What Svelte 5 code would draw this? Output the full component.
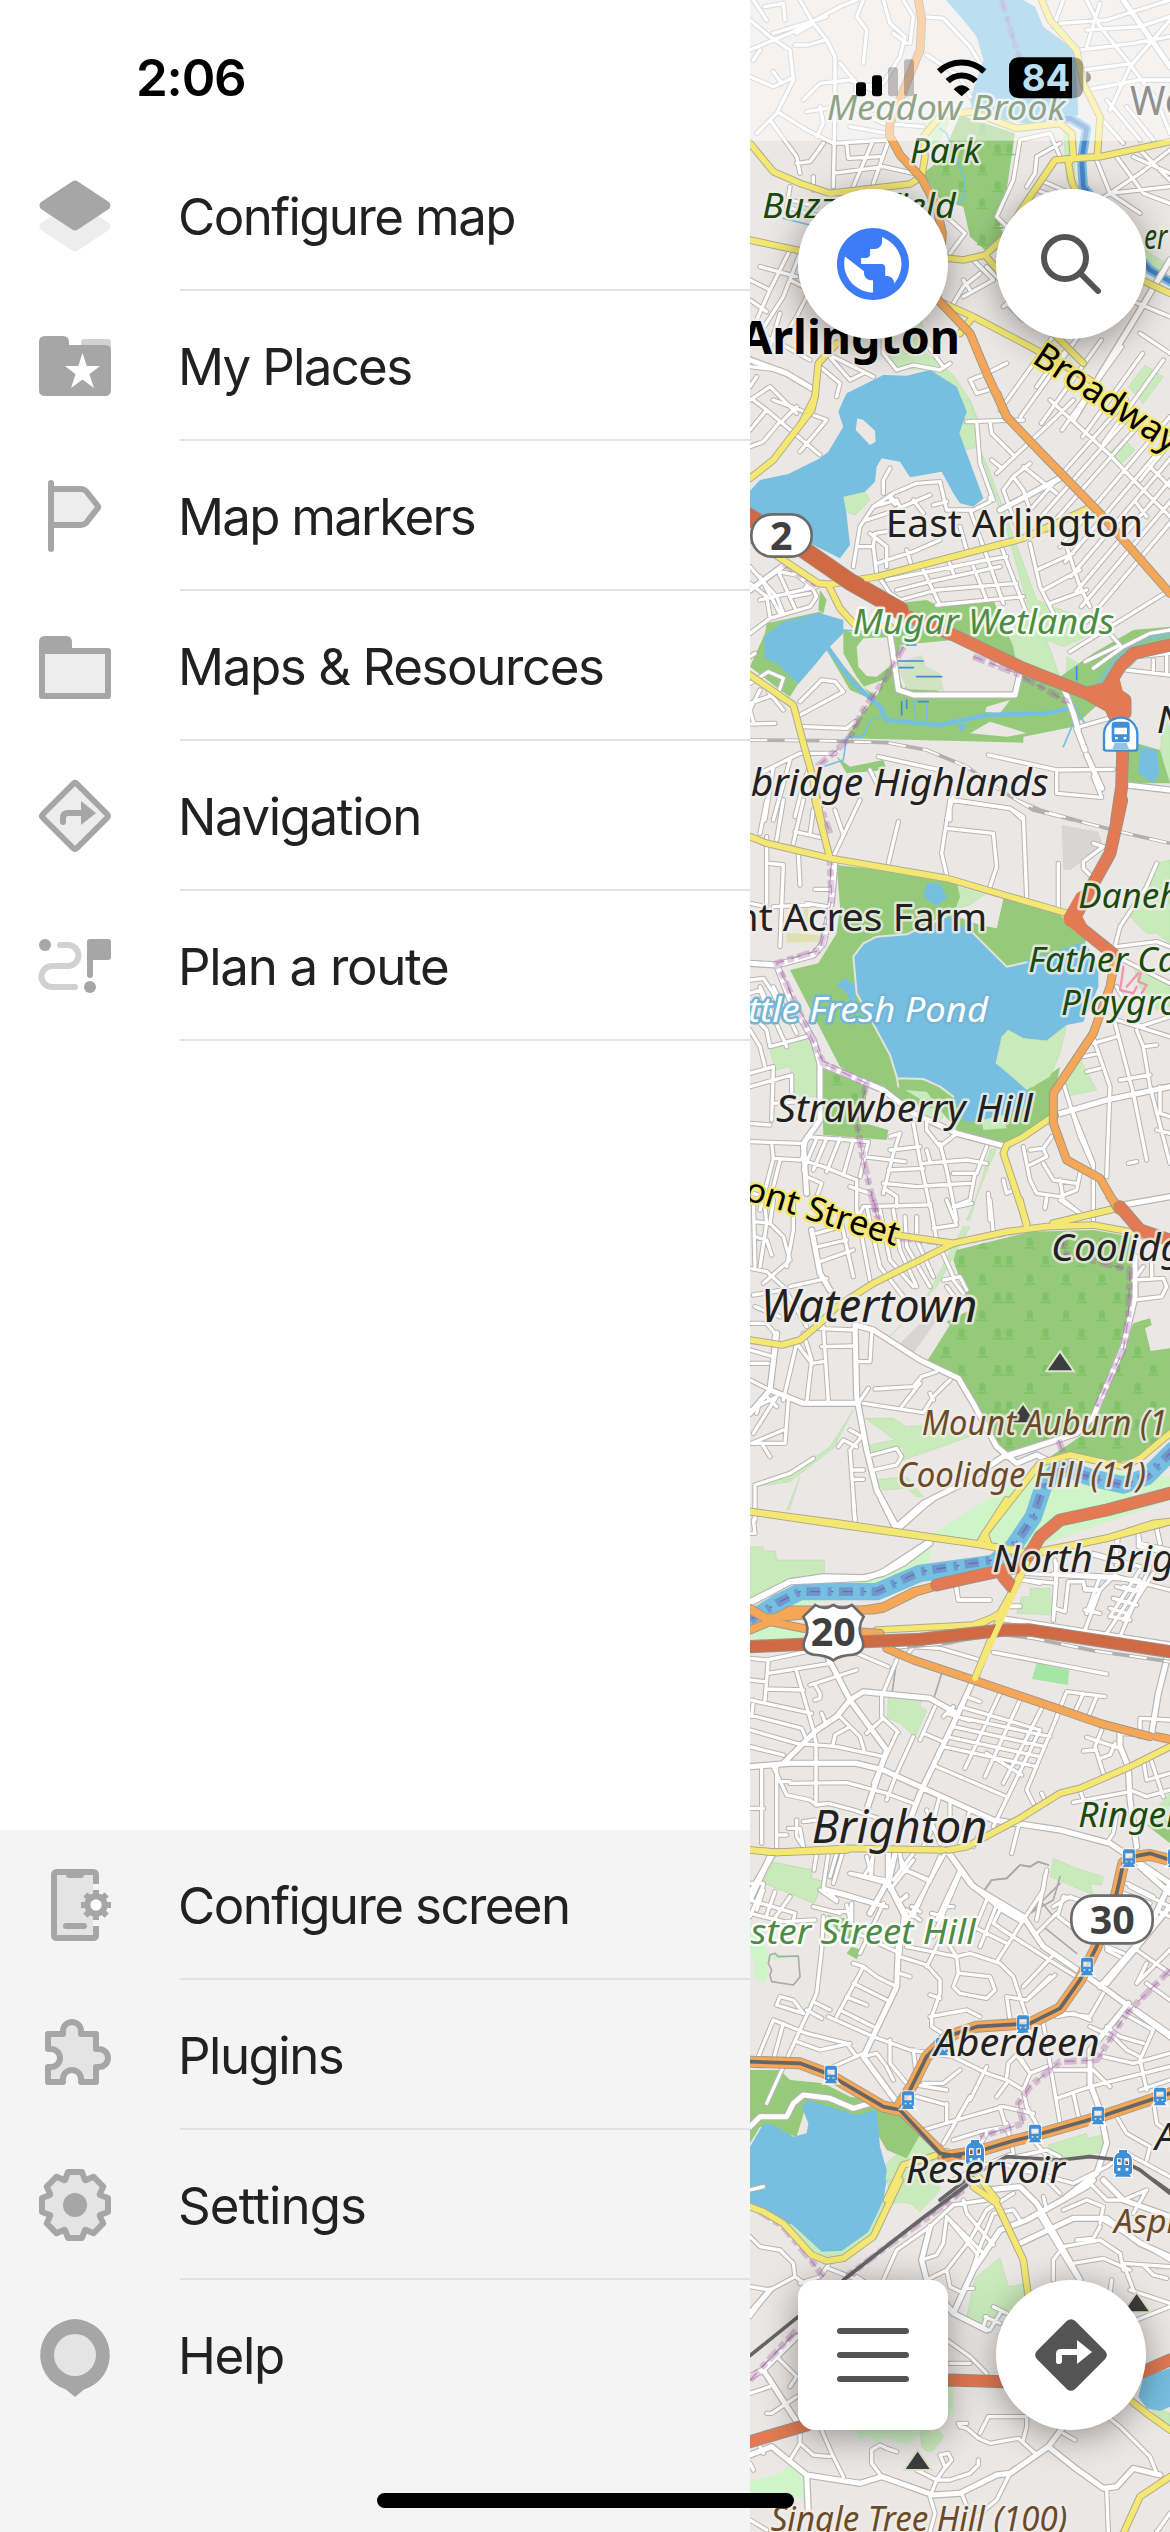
<script>
  // Parallel streets: n segments of vector (dx,dy), each shifted by (sx,sy).
  function rows(x, y, dx, dy, n, sx, sy) {
    let d = '';
    for (let i = 0; i < n; i++) d += `M${x + i * sx},${y + i * sy}l${dx},${dy}`;
    return d;
  }

  // Map tiles. Units are thirds of a pixel; y is the tile's own offset.
  const tiles = [
    {
      y: 0,
      pale: 'M545,350L600,330L640,340L600,420L560,440ZM440,1070L520,1020L545,960L560,1060L600,1090L640,1125L690,1200L715,1260L680,1260L650,1160L570,1110L470,1105ZM1215,1095L1270,1130L1210,1210L1165,1160ZM1215,750L1280,790L1250,830L1200,800ZM970,380L1010,400L1000,560L980,540Z',
      green: 'M660,345L825,400L800,570L765,660L790,700L735,750L690,710L670,620L600,600L550,520L600,480Z',
      water: 'M618,0L850,0L885,20L910,80L1005,150L1015,345L930,380L850,370L700,340L690,300L730,180L710,110L670,60Z',
      river: 'M930,360L990,355L1040,385L1025,480L1030,560L1080,620L1150,720L1230,810L1300,850',
      minor:
        'M30,150L160,95L300,20L350,0M100,100L260,50M40,0L80,60M75,20L130,10L135,60M180,0L220,70L260,120L285,170L285,320L280,560M220,70L170,100M255,120L205,135L165,135M370,0L350,50L380,90L370,190M430,0L450,70L495,110L480,170L430,250L355,260M460,100L500,130M490,0L520,50L510,130M550,50L610,55L690,140L720,190M560,165L660,230L690,290M30,60L90,110L150,150L160,240L110,340L50,400M60,150L40,180M100,215L125,250M30,230L100,260L155,235M190,300L240,250L330,240L420,280M200,335L290,320L400,330M300,190L350,250L340,330M240,320L250,370L230,410M120,340L200,390L280,430L440,420M90,360L170,470L180,520M170,490L210,485L250,430M320,430L325,475L420,470M280,520L430,500L520,520M400,420L340,560M450,410L400,550M350,330L430,370L550,380M330,380L440,400M220,530L220,570M150,560L140,620L200,640L260,650M150,600L230,620M490,290L540,340M970,0L940,80M960,70L1100,60L1290,0M1040,0L1080,80L1160,180L1250,300L1290,400M1040,90L1200,80L1290,50M1020,150L1180,130L1290,110M1030,210L1180,190M1040,270L1200,240L1290,240M1080,10L1040,140M1290,60L1170,200L1110,330M1100,300L1200,420M1070,340L1150,430M1160,320L1240,420M840,420L930,400L960,470M840,420L820,540L770,650L810,690M890,470L960,430M890,470L885,520L860,560M900,540L1060,610L1110,580L1290,560M890,570L970,600M1070,480L1110,580L1200,640M1130,470L1210,580L1290,610M1200,450L1290,540M1110,580L1200,520L1290,450M1180,470L1290,520M30,840L90,870L150,750M90,870L50,960M30,900L80,935M180,760L130,890L60,1000M150,840L210,870L170,950L100,1060M60,800L170,830M30,990L120,1030L210,1080M120,940L90,1040M620,650L675,700L630,760M700,780L760,840L670,890M640,910L670,860L720,820M670,840L690,870M740,800L790,850L820,900M800,910L850,960M790,920L830,890M820,800L870,860L950,960M1000,1030L940,1090L890,1160M430,1000L430,1060L470,1110L520,1095L600,1110L630,1090M550,1020L610,1100M690,1140L740,1120L800,1090M690,1140L710,1180L760,1165M1200,1000L1290,1060M1120,880L1290,950M30,1100L120,1110L210,1160M260,1060L330,1140L370,1120M280,1070L400,1130M240,1100L300,1150L290,1190M30,1200L90,1160L170,1240M50,1130L30,1160' +
        rows(780, 1230, 180, -250, 6, 62, 20),
      road: 'M1290,780L1200,930L1090,1110L1000,1260M30,1080L140,1120L215,1165M1150,0L1290,200',
      yellow:
        'M30,430L100,515L180,550L270,580L400,565L510,552L545,530L555,470L550,410L600,350L690,335L830,385L960,370L995,400L1000,470L985,490L995,545L1040,640M30,720L180,752L400,750L670,780L735,765L790,715L850,620L945,480L1005,475L1080,470L1290,425M905,0L930,60L1010,150L1030,250L1080,350L1072,470M600,905L700,950L880,1045L1050,1140M735,765L790,830L900,960L1030,1090M1215,845L1290,880M695,955L660,1000M290,1030L235,1090L225,1190L190,1260',
      orange: 'M535,0L545,60L540,150L450,370L448,405L480,465L545,535L590,620L607,700L600,780L590,895L690,1000L740,1120L800,1250',
      dash: 'M785,0L830,150L860,220',
      stream: 'M600,385L620,400L650,480L675,540L670,600L640,612L550,605M130,655L210,675'
    },
    {
      y: 1200,
      pale: 'M310,290L375,275L390,300L345,345L315,335ZM665,0L690,0L710,70L715,140L680,150L658,100L680,35ZM715,140L740,190L890,600L990,640L1060,700L970,740L920,720L960,830L820,780L810,690L870,640L800,390ZM470,790L560,770L610,870L500,865ZM980,770L1060,815L980,840ZM460,880L560,895L550,970L460,945ZM1150,115L1185,150L1140,195L1105,160ZM1265,950L1290,930L1290,1150L1260,1140Z',
      green: 'M470,610L560,600L600,620L760,600L820,740L830,800L960,830L1060,760L1180,690L1290,680L1290,740L1160,780L1100,890L1000,980L850,1010L850,1028L320,1015L350,960L400,900L350,830L310,760L310,690L350,700L470,680ZM30,800L75,700L80,670L240,635L310,690L265,745L400,900L330,870L260,750L200,810L150,890L120,870ZM240,570L260,600L250,640L235,630ZM290,1070L330,1100L430,1080L440,1110L320,1120ZM1165,1060L1190,1030L1260,1050L1290,1150L1165,1150Z',
      land: 'M350,740L370,715L450,712L460,790L410,830L380,828L355,800ZM480,735L640,720L840,820L820,880L600,880L540,800L490,870L465,800ZM690,1000L750,965L800,980L860,1000L800,1010ZM740,920L810,900L780,940L735,935ZM370,860L430,840L410,890Z',
      water: 'M310,0L295,35L310,80L265,155L240,175L145,222L60,240L30,272L30,330L210,430L300,475L330,435L320,345L310,290L375,275L405,245L410,200L425,175L480,185L510,232L605,215L640,280L660,310L700,320L730,295L658,100L680,35L650,-40L570,-90L500,-73L430,-75L320,-20ZM130,665L235,638L310,660L310,700L265,745L220,800L175,852L110,790L75,775L72,710ZM1200,1040L1250,1050L1258,1120L1240,1150L1195,1120ZM650,975L685,972L665,995Z',
      islands: 'M347,90L352,55L370,60L405,92L407,125L390,135Z',
      marsh: 'M470,790L545,765L560,800L600,820L612,872L500,868Z',
      stream2: 'M265,745L340,850L420,920L440,960L600,975L740,945L920,940L990,925L990,905',
      stream: 'M440,950L390,960L370,1010L320,1010L310,1080L250,1100M520,900L525,950M560,910L560,960M1000,910L1040,980M990,920L1000,970L970,1040M310,690L450,700L600,690',
      ditch: 'M475,783h75M475,803h45M530,830h75M500,735h28M1010,800v40M485,905v40M500,900v25M535,905h30',
      river: 'M1050,880L1110,800L1160,745L1220,715L1290,705',
      rail: 'M30,1020L250,1022L440,1028L560,1050L680,1100L780,1170L880,1230L1000,1260',
      dash: 'M490,740L440,830L370,930L330,1010L290,1050L220,1110M700,770L830,820L990,910M130,490L230,560M210,1110L235,1200L270,1300',
      minor:
        'M30,90L80,30L40,0M80,30L240,165M30,140L70,125L120,65M100,0L260,60L180,155M170,20L130,60M30,500L110,590L130,640M30,550L80,590L90,650M60,530L120,640M115,515L165,625M60,600L230,560M155,590L210,580M30,700L90,655L210,620L230,590L215,560L170,525L115,515M215,540L190,570M30,850L85,815L130,835L115,880L30,910M85,875L130,930M30,770L45,760M60,870L30,930L40,965M30,972L105,970M180,905L245,840L285,845L310,875L180,945M190,980L320,985L345,965M200,1060L285,1060M60,1120L180,1060L250,1060M75,1260L100,1100M100,1260L150,1080M165,1250L190,1150L205,1110M390,1110L410,1150M415,1070L600,1110M340,500L360,380L400,320L460,280L530,250L600,245L620,330M430,280L430,240L450,205M380,360L440,340L570,285M520,300L550,340M580,315L620,305M350,440L400,440L405,400L440,395M400,440L410,520M410,520L450,580L480,600M390,400L440,440L440,500M410,490L520,455L600,420M440,540L740,480L800,470M470,570L570,545L780,500M480,600L590,570L830,550M590,615L850,590M500,450L515,500M545,500L600,615M625,480L640,520M700,500L740,600M730,440L790,610M780,430L860,640M660,380L680,450M690,330L730,440M620,330L700,330L750,305L750,290M400,320L470,300L480,320M680,65L850,60M710,65L720,190L760,300M750,65L755,100L820,165M755,180L780,200M770,220L950,50L1000,0M790,270L820,230L870,190M790,270L830,380M820,230L850,270L870,330M850,200L950,280M930,0L1110,165L1180,240L1290,350M980,440L1020,560L1050,620M870,430L900,560L940,640M890,510L1000,460M910,570L1020,510M930,610L1040,570M1190,310L1220,350M1230,200L1290,260M1200,240L1240,190L1290,130M990,755L1290,570M1035,785L1140,735L1100,690M1060,805L1150,740L1230,700L1290,690M1150,810L1190,770L1290,760M1160,810L1290,825M1240,780L1240,810M1280,760L1280,820M1020,980L1160,940M745,1065L950,1110L1120,1108M950,1110L950,1175M950,1180L1085,1192L1060,1130M630,1260L630,1200L810,1225L850,1260M620,1260L640,1190' +
        rows(870, 330, 290, -330, 3, 25, 30) +
        rows(960, 440, 330, -390, 6, 16, 45),
      road: 'M450,700L465,800L475,870L520,885L825,885L840,820M970,860L1000,940L1015,990M1010,985L1035,1050M1040,1065L1085,1165M780,330L960,235M30,570L140,490M1160,1155L1290,1170M450,290L465,310',
      yellow: 'M225,-10L215,30L100,180L30,235M30,415L130,480L235,550L270,553L410,530L850,415L1045,325M265,555L300,625L345,675L450,680M30,825L160,915L190,1030L215,1120L245,1270',
      orange: 'M770,-20L800,50L900,155L1080,340L1290,580',
      trunkwide: 'M10,340L190,448L330,545L480,630',
      red: 'M470,635L640,705L850,805L1040,880L1100,865L1140,800L1180,760L1290,735M1040,880L1110,920L1140,980L1148,1060L1145,1160L1130,1260M1110,870L1155,900L1155,940',
      redfill: 'M1030,865L1090,850L1130,800L1150,880L1130,950L1110,940Z'
    },
    {
      y: 2400,
      pale: 'M90,750L195,710L235,780L230,890L160,890L150,800L105,810ZM650,260L735,285L720,305L640,330ZM500,870L570,880L610,950L580,980ZM770,1045L680,1260L690,1260L750,1050ZM1250,190L1290,180L1290,430L1250,400L1220,400L1170,350L1230,260ZM1020,775L1070,870L990,887L960,830ZM1180,500L1290,560L1290,620L1250,630L1200,560Z',
      green: 'M290,195L420,210L650,245L660,290L640,345L720,375L770,385L790,295L960,345L1040,420L1010,450L800,500L600,600L640,880L880,860L960,800L930,950L800,1030L660,1000L600,930L480,900L300,800L150,510L235,490L290,400L300,320ZM245,805L380,850L375,970L445,990L440,1020L250,1005Z',
      water: 'M340,470L370,430L410,410L500,403L580,370L620,348L700,400L800,500L1035,425L1075,500L1075,560L1030,665L980,675L920,722L850,715L805,690L785,710L767,790L890,890L850,920L770,960L670,965L640,890L600,860L550,837L470,830L450,765L350,580ZM560,250L600,252L622,290L590,318L550,290ZM290,555L315,535L345,555L350,640L320,580Z',
      shore: 'M620,348L500,403L410,410L370,430L340,470L350,580L450,765L470,830L475,860M700,400L800,500L860,487M470,835L550,837L600,860L640,890',
      pale2: 'M805,690L850,715L920,722L980,675L960,760L930,830L860,870L770,790L785,710ZM725,960L790,945L800,985L730,990ZM495,870L560,875L575,895L545,900Z',
      land: 'M985,672L1030,672L1050,700L970,790L935,818L905,785L905,770ZM735,285L790,295L770,385L670,330Z',
      grey: 'M965,75L1075,95L1090,140L990,210L970,210Z',
      sand: 'M140,398L235,405V425L140,428ZM190,325H205V398H190Z',
      rail: 'M830,0L900,30L1040,70L1180,105L1290,130',
      dash: 'M225,0L270,180L275,300L240,450L110,490L180,640L250,790L380,850L350,970L370,1080L410,1250',
      minor:
        'M80,0L60,100M130,0L110,120M190,0L160,130M220,30L210,100M165,95L255,115M285,30L310,105M360,0L280,170M475,65L445,190M630,0L605,160L620,225M620,85L760,100L770,200L750,260M640,0L810,25L850,50L860,290M955,190V330M1090,140L1030,185L1030,205L1050,225M1060,130L1090,140M1250,190L1220,260L1140,380L1125,440M1130,440L1250,425L1290,440M30,310L80,320L80,110M90,190L130,195L120,440M175,160L180,255M225,268L275,268M200,310L260,320M100,320L210,315M30,540L70,535L100,580L130,650M30,580L60,570L80,620M30,690L60,740L75,800M30,640L80,690L90,740M60,560L140,740M100,560L170,700M90,740L200,710M30,820L100,800L95,960M30,860L155,825L155,880M100,910L180,905M30,970L90,975M30,1025L180,1030M95,1030L100,1075L180,1080M200,1010L385,1025L360,1130M200,1015L185,1080L250,1100L350,1140L350,1230M230,1015L190,1110M260,1015L220,1110M300,1015L260,1115M340,1020L310,1125M100,1075L60,1230M120,1080L90,1200M200,1130L245,1150L230,1190M40,1180L100,1200M330,1160L390,1180M440,1170L470,1190L470,1220M430,1180L460,1060L480,1000M370,1070L495,1085M445,1110L550,1105M430,1150L530,1160L600,1155M520,970L540,1080L570,1220M450,1050L540,1040M480,1000L450,1010M550,1090L680,1080L740,1090M560,1050L570,1085M560,960L560,990L600,1040L650,1000M600,1030L620,1110L650,1260M640,1120L705,1120L690,1200L640,1220M600,1155L690,1150M740,1040L710,1120M745,1180L750,1260M790,1140L800,1180L820,1170M370,1220L560,1215M370,1220L350,1260M850,1040L870,1140L890,1180L960,1190M870,1050L910,1045L935,1010M910,1045L920,1070L870,1095M910,1090L940,1140L1010,1150M960,1140L970,1200L1020,1240M1020,1120L1010,1170L960,1190M920,1190L915,1225M1000,940L1060,1090L1060,1260M970,850L1020,1010L1060,1100M1055,700L1110,860L1100,1130M1060,730L1130,710M1030,770L1075,760M1040,815L1080,805M1120,650L1180,880L1220,1080M1130,660L1290,710M1190,690L1210,740L1250,735M1210,740L1230,860M1140,840L1230,825M1230,860L1290,1090M1260,860L1260,940L1290,950M1250,990L1290,1000M1165,1090L1190,1085M1130,560L1200,680M1200,680L1290,650M1150,480L1290,550',
      road: 'M285,180L275,300L250,430L220,465L110,495L150,600L220,720L240,790L430,870L520,940L650,1000L800,1040M240,790L240,960L190,1030L200,1180M30,490L110,495M945,945L1100,900L1290,860M1120,1220L1290,1190',
      yellow: 'M30,110L80,130L270,175L620,235L980,340M225,0L270,175M945,945L850,1010L800,1035L790,1060L860,1270M1130,1225L940,1270',
      orange: 'M1125,480L1110,560L1060,700L1000,790L940,880L940,970L980,1080L1080,1135L1135,1230',
      red: 'M1145,0L1110,160L1060,250L1000,360L1030,390L1120,462',
      redfill: 'M1060,250L1010,280L970,350L975,372L1105,465L1130,450L1045,385L1025,345Z',
      pink: 'M1150,500L1145,540L1140,570L1180,580L1190,560M1160,560L1195,520M1205,510L1195,545L1220,555L1205,580'
    },
    {
      y: 3600,
      pale: 'M375,655L460,655L500,680L600,670L690,710L490,780L490,740L400,760L385,735L465,720ZM400,840L500,830L550,890L530,890L500,865L430,870ZM670,80L560,290L440,420L460,400L590,260L690,80ZM340,630L270,740L140,830L50,860L150,845L280,745ZM180,830L140,930L148,930ZM30,1040H68L72,1053H106L110,1080H253V1130L150,1140L30,1210ZM870,1165H930V1190H940V1245L830,1240L845,1190H870Z',
      bright: 'M580,1000L850,830L900,790L1290,830V880L960,960L1290,900L920,1030L800,1050L580,1020L560,1120L100,1240L30,1260V1220L380,1140L450,1120ZM900,820L1290,860L970,950L850,1010Z',
      grey: 'M560,350L620,320L520,460L480,430Z',
      green: 'M650,150L870,95L1060,90L1175,110L1180,290L1150,450L1050,690L800,765L660,540L560,485L630,375L620,365L690,330L640,180ZM1180,370L1230,355L1235,375L1215,385L1232,453L1290,445V700L1200,770L1130,790L930,770L1050,690L1150,450Z',
      river: 'M1300,750L1220,830L1150,855L1060,835L960,800L910,860L880,950L820,1040L760,1090L540,1120L410,1175L180,1175L110,1210L30,1260',
      flow: 'M1300,750L1220,830L1150,855L1060,835L960,800L910,860L880,950L820,1040L760,1080L540,1115L410,1175L180,1175L110,1210L30,1260',
      dash: 'M400,0L430,110L640,130L870,85M970,110V160L1170,210L1165,350L1150,450L1070,620M955,720L970,760',
      minor:
        'M40,0L45,200M75,20L80,70L60,200M100,0L90,70L130,110L150,180L70,250M160,0L160,90L140,200M45,65L90,70M45,110L80,120L95,165M30,205L80,215L130,260L200,380M150,260L260,235M130,270L40,285M45,320L120,350M30,370L80,370L105,400L100,430M170,430L130,600M170,430L215,490L250,485M190,400L215,480L200,610M250,380L265,605M230,385L340,390M245,440L345,438M395,400L390,485L355,485M30,490L85,490M30,450L100,470M300,50L340,230M350,30L390,240M230,100L300,80M235,140L320,120M240,185L340,150M380,20L420,200L490,290M420,30L450,180L520,260M460,30L480,150L530,260M495,50L500,140L570,260M530,50L530,120L580,230M570,10L590,120L640,230M620,0L650,75L580,85M650,20L695,10M610,240L660,230L680,270M620,260L650,300M640,240L670,280M750,0L760,100M920,0L915,20M960,0L1020,40M1210,200L1180,240L1270,235L1280,260L1265,290L1180,300M1235,190V235M355,610L385,565M405,567L520,560L545,530L590,515M485,620L540,550M370,610L550,638L580,590L630,540M580,600L570,580M330,690L365,710L330,750L345,960M295,740L310,720L350,740M395,765L470,745L485,770L470,795L400,810M335,810L370,810M340,838L370,838M220,775L150,820L45,855L45,960M40,960L45,1000L30,1000M30,630L110,590L40,700M80,590L110,620M60,600L50,640M30,730H135L145,600M65,730L90,770M130,690L35,730M30,540L90,570M650,1160L655,1200H750M850,1140L950,1150M945,1080L950,1130L940,1260M940,1120L1130,1130L1290,1170M990,1145H1030L1035,1165L1080,1170L1040,1240M1040,1240L1080,1130M1080,1170L1120,1130M1130,1010V1110M1060,1065L1180,1100M1195,1000L1200,1030L1290,1050M1250,985L1260,1030M1200,1110L1110,1250M1240,1120L1150,1260M1150,1160L1200,1175M1130,1200L1190,1215M810,1220H840M1115,1250L1170,1260',
      road: 'M345,375L400,390L540,480L655,535L700,610L770,740L830,790L890,765L920,780M345,375L350,590L380,750L410,870L470,980L550,910L670,850L790,770L950,720M350,610H190L90,570L110,400M90,570L30,640M215,90L240,220L270,270M1185,170V290L1150,440L1060,650M800,770L1010,700L1060,650M570,1030L490,1090L430,1120L370,1133L250,1130L150,1145L30,1205',
      yellow: 'M860,80L840,0M30,420L125,435L180,420L240,370L290,320L400,250L530,185L640,130L800,95L920,80L1060,75L1170,95L1220,110M470,105L640,130M1130,25L940,70M30,935L300,970L700,1030L830,1055L890,1055L1100,1015L1240,970L1290,965M720,1030L735,1000L900,790L990,765L1150,800L1200,775L1290,700M735,1000L745,1030M870,1055L830,1150L780,1240',
      orange: 'M1110,-10L1135,20M600,1155L520,1175L430,1220L370,1230L80,1255L30,1225',
      red: 'M1140,20L1200,90L1290,120M1290,880L1100,930L960,960L900,1010L870,1060L840,1100L700,1130L590,1155M790,1130L815,1160'
    },
    {
      y: 4500,
      pale: 'M445,590L543,600L540,620L560,632L525,712L480,670L442,655ZM100,1087L215,1110V1135L250,1145L222,1210L68,1147ZM940,1075L1010,1105L1090,1130L1085,1155L1050,1150L1060,1185L930,1130ZM1290,880L1220,960L1290,990Z',
      green: 'M1220,975L1290,960V1030Z',
      mint: 'M890,488L987,510L984,555L876,537Z',
      bright: 'M30,390L150,370L190,400V440L30,415Z',
      minor:
        'M340,0L345,65M648,265L655,300H750M30,475L80,480L200,455M85,520L270,490M85,480L75,600M30,540L75,545M80,567L190,570M170,515L220,690L228,730V915M30,600L215,640M30,645L185,685L200,720M30,690L170,730L290,740L430,770M30,740L130,765M40,600L35,650M210,555L350,510M225,555L240,580V595L225,600M350,460L445,500M470,480L425,590V650L475,697M430,655L380,700M520,440L600,445L720,480M505,460L520,440M300,650L360,710L372,750M330,680L285,705L278,740M245,640L255,665M585,620L540,720M640,620L610,650M620,640L690,662M680,590L720,605M660,620L900,690M650,650L930,710M640,680L915,740M620,710L900,770M610,740L890,800M740,760L845,825M590,800L800,890M550,700L610,725M780,580L675,805M840,600L735,830M905,625L790,850M955,640L860,870L880,910M900,690L760,980M978,580L950,650M980,575L1095,590M1030,580L1005,635M1070,590L1045,650M760,457L1100,522M1040,712L1140,745M1030,753L1065,750M1085,690L1065,740L1090,820M1080,775L1110,765L1125,730M1200,710V655L1290,660M1140,700L1270,710M1210,780L1220,840L1290,820M1230,770L1270,890M1170,870L1220,890L1290,870M1000,907L1170,875M1020,870L1030,900M905,880L920,910M150,850L320,848L440,880L520,910M120,845H150M65,800V1030M110,800V1040M100,800L140,885L210,900L230,915L265,910L340,930L430,960M30,925H70M110,1005H140M145,985H180L190,1040M170,960V1010L190,1040M190,965L230,960M230,1060L222,1110M265,1060L250,1160L290,1200M290,1060L270,1130M310,1050L280,1150M400,1060L390,1135M330,1120L440,1140M390,1100L370,1130M485,1105L570,1140M480,1060L485,1105M520,1060L460,1140M600,1070L520,1250M660,1110L590,1260M520,710L470,820L440,900M470,700L400,850M630,900V950M600,885L570,1000L550,1040M690,930L660,1030M740,950L700,1040M840,960L815,1060M1130,940L1120,1000L1100,1030M1160,1150L1240,1190M1150,1180L1230,1210M900,250L850,240M950,190L940,360M945,325L975,335L985,245H1030L1035,270L1080,270L1035,390M1035,330L1080,340M1110,190L1130,230L1200,250L1100,400M1230,200L1140,410M1130,260L1185,275M1120,295L1175,310M1110,325L1160,340M860,220L1200,240M1060,160L1200,200M1195,100V140L1290,160M1250,85L1260,130M1135,110L1130,150M810,318H840M500,1230L540,1260M70,1155L30,1250M150,1190L100,1260M250,1170L430,1220M320,1215L330,1260M480,1200L500,1190M890,1260L920,1110M940,1220L990,1190L1060,1215M560,930L600,1030',
      gminor: 'M730,1175L755,1140L800,1135L840,1095L870,1100L895,1085L925,1095M605,520L580,600M470,480L455,590M960,1130L940,1200L870,1240',
      road: 'M425,0L470,90L560,10L575,0M265,475L330,600L440,750L380,930M30,800L150,790H350L430,810L550,865L760,960L960,990L1110,1030L1290,1150M130,790L230,690L290,650L330,600L370,575L570,595L650,640M700,540L650,650L540,880L510,960M1290,440L1255,580L1235,700M1140,700V740L1165,800L1170,900L1190,1040M780,355L1290,435M30,310L150,245L380,235L430,215L560,130M100,1060L30,1180M620,1050L690,1150L790,1230L840,1260M470,1040L445,1150L500,1260M390,1240L440,1150',
      yellow: 'M30,35L300,75L700,130L830,150M800,0L720,125M30,1050L110,1057L320,1045L610,1050M625,1050L680,1040L840,955L960,880L1020,865L1170,800L1290,740M860,190L780,350L705,535M700,385L780,340M1290,65L1100,115L890,160M410,390L700,375L780,345',
      orange: 'M440,445L520,480L700,540L950,625L1080,670L1230,710M1250,710L1290,718M30,330L90,362L150,330H400L430,325L530,275L590,258M30,390L90,365L190,385L420,400',
      trunk: 'M30,440L300,428L540,418L790,390H870L1290,455',
      rail: 'M450,445L620,430L760,400L880,415L1060,452L1290,485'
    },
    {
      y: 5550,
      pale: 'M100,37L215,60V85L250,95L222,160L68,97ZM495,890L540,860L600,900L600,1000L460,1060L430,950ZM925,885L1040,850L1045,865L1085,855L1090,905L990,925L940,920Z',
      bright: 'M30,215L60,270L90,310L175,315L175,325L85,330V380L70,400L38,380L45,340L30,300Z',
      green: 'M30,660L120,660L150,690L250,700L330,740L400,750L480,790L540,855L500,925L440,900L400,830L330,790L200,760L170,860L60,830L30,880ZM260,195L340,210L330,270L290,240ZM335,290L365,300L350,328L320,310Z',
      water: 'M65,830L80,820L100,825L160,860L200,850L205,820L185,770L205,750L350,795L410,780L420,890L440,960L430,1050H30V890Z',
      minor:
        'M30,150L165,190L160,210M30,190L130,215L225,210M30,100L70,100M105,125L80,195M70,120L50,180M330,70L440,100M380,20L395,75M395,30V70M485,55L570,95M480,20L500,60M520,30L450,120M620,0L510,200M665,60L580,260M250,115L310,130L440,170M290,185H330L335,160V220M240,120L290,155M220,170L300,190M430,160L360,310M500,135L480,155M515,170L540,185M620,170L640,170M575,190L610,200M740,150L690,270M770,165L720,290M700,230L800,280M790,160L760,220L850,280M780,235L960,350L1010,380M850,210L770,335M945,310L850,410M945,375L860,450L800,440L810,510M860,450L930,380M690,310L650,320L655,370L640,410L660,430L740,445L765,420L750,380L660,370M690,310L780,340L820,380L860,500M480,320L560,345L600,390V430L575,500V530L640,570M570,435L600,445M480,370L510,380M500,290L650,320L630,290M600,270L560,350M340,340L370,350L410,380L470,410M370,350L290,500M340,400L440,450M320,440L380,465M300,480L400,530M265,500L400,560L510,600L640,620M120,440L110,465L190,490M120,440L160,450L190,490M220,455L270,480M200,480L245,505M100,510L200,550L320,580L350,620M100,510L55,620M130,520L100,630M170,575L240,600L330,580M250,200L245,300L230,430L80,760M570,500L680,480L720,500M450,570V640L500,700L620,720M370,620L410,610L440,650L460,690M370,610L280,650M520,600L530,680M660,660L610,700L550,700M640,620L740,670L800,690L850,720M740,650L690,750M620,760V820M530,740L620,765M800,680L805,640L830,615L870,670L850,720L860,770L900,840M840,620L870,670L920,650M770,740L800,700M550,840L650,810L790,770L880,790M780,770L800,840M610,880L690,740M640,870L720,845L800,830M830,920L920,900L960,920M910,520L940,700L960,820M950,500L1000,490L1050,510M950,745L1050,710L1290,650M1000,730L1020,820M940,660L1060,660L1110,710M970,490L1050,500L1090,430M1050,530L1120,560L1160,600L1200,620M1100,530L1140,560L1210,580M1090,620L1180,640L1290,610M1150,490L1240,540L1200,630L1220,720M1190,480L1290,550M1220,400L1290,450M1190,300L1290,370M1290,300L1190,400L1220,340M1170,110L1290,170M1160,160L1250,200M1130,800L1160,850L1230,890L1220,930M1240,750L1250,820L1290,850M955,190L970,140L1000,145L1040,160M950,190L890,250M955,200L1020,250M915,75L910,120L850,210M1290,200L1250,180M1100,300L1140,320M1100,290L1150,310M350,250L480,310L490,200M1290,690L1200,720M800,820L820,910L700,960L640,990M740,850L700,920M880,870L930,930M780,940L1000,1000L1100,950L1160,910L1290,980M960,1030L900,970L830,960',
      gminor: 'M730,125L755,90L800,85L840,45L870,50L895,35L925,45M105,310L115,320L175,318L180,380L160,405L95,395L90,375L95,360L85,340L90,315L105,310M850,210L960,100M900,150L940,200M910,230L1010,310',
      road: 'M620,0L700,110L850,200L910,290L1100,420L1290,560M445,0V100L500,200L475,290L470,410L370,620L480,770M30,150L90,20M1290,170L1100,400M30,830L60,800L140,800L160,760L190,735L270,745L340,775L390,760M1165,460L1050,600V700L1080,780L1100,880L1070,970L980,1040M1290,130L1200,50M1290,100L1220,250L1080,410',
      yellow: 'M30,0L110,7L320,0M620,905L560,925L490,945L440,1050M700,960L770,1050',
      wide: 'M30,635L180,640L260,670L430,770L480,780M470,780L520,700L560,620L620,560L710,530L870,520L960,475L1020,390L1070,290L1130,130L1150,40L1180,20L1230,15L1290,30M610,920L710,905L810,875L870,860L1080,800L1260,740L1290,730',
      orange: 'M480,780L610,910',
      tram: 'M30,635L180,640L260,670L430,770L480,780L600,910L660,920M480,780L520,700L560,620L620,560L710,530L870,520L960,475L1020,390L1070,290L1130,130L1150,40L1180,20L1230,10L1290,30M610,920L710,905L810,875L870,860L1080,800L1260,740L1290,730M600,1050L690,980L800,920L960,930L1050,920L1140,930L1200,960L1290,1030',
      dash: 'M1290,360L1160,490L1070,630L960,635L870,710L835,760L850,820L720,860M690,990L640,1040'
    },
    {
      y: 6540,
      pale: 'M440,0L590,0L600,30L540,95L510,70L455,65ZM780,233L805,320L855,312L860,380L720,430L680,410L705,295ZM540,755L590,745L612,770L580,810L560,815L545,800ZM1200,660L1290,700V740Z',
      bright: 'M30,905L120,880L150,850L200,890L190,955L30,935ZM600,620L640,615V700L620,710ZM340,740L530,740L545,760L500,795L430,770L420,790L380,765L360,785Z',
      water: 'M30,0H440L430,60L390,160L310,215L240,220L180,170L150,140L30,80ZM1290,565L1210,590L1195,650L1220,685L1260,693L1290,680Z',
      shore2: 'M475,0L395,165L310,225L240,228L150,145',
      dash: 'M670,30L600,85L510,150L420,215L320,290M30,600L170,450M60,95L130,140L220,250L250,290',
      minor:
        'M30,170L60,200L120,210L160,250L165,290L220,330M165,290L90,330L30,410M30,320L90,330M265,255L240,290L180,310M265,265L380,310L350,290M430,300L470,210L570,140L640,75L740,60M545,240L590,225L610,190L620,110L690,180L730,220M620,110L710,220M640,400L690,290L720,200L760,100L820,90L840,120M670,60L680,100L760,195M560,300L620,270L690,180L740,90L820,40M620,270L630,320L660,335M910,50L920,90M900,110L1010,290M970,90L1040,60L1090,80L1080,130M940,300L940,240L970,200L1080,180L1140,220L1150,270M1000,250L1090,235L1170,270M1010,180L1060,175L1080,140M1090,120L1290,240M1150,250L1290,260L1250,260M1040,0L1100,60L1150,60L1220,30L1180,100M1210,255L1240,285L1280,295M1170,330L1290,370M1150,250L1180,330M1190,420L1290,380M1115,300L1110,340M30,640L90,620M80,700L95,700L170,650M110,530L170,590L150,620M680,325H700M620,480L690,530L740,580M630,550H690M760,380L800,400M735,410L780,430M750,450L780,400M740,410L730,440M180,750V790L150,840M180,790L220,825L270,830M245,750L275,820L310,890M60,800L70,820M30,850L40,870M425,890L395,850V810L420,795L440,805L470,815M530,870L590,900L630,900L690,880L715,855V840M590,900L570,950L585,1000L570,1056M600,825L625,820L635,840L610,870L590,900M600,825L615,860M660,740L680,745L715,775L750,790L835,775L885,820M720,760L745,710L860,710L860,740L850,780M660,740L655,730L680,730M810,880L770,960L710,1010M665,940L685,990M970,760L1005,780M1090,700L1140,740L1230,830L1250,880M1100,930L1105,1056M1290,1000L1250,1056M30,1020L80,1050M30,30L70,20',
      road: 'M545,240L570,140M545,240L560,300L640,400L740,450M30,590L70,570L170,470M70,570L180,740M640,400L700,270L780,150L860,120L1040,20L1060,0M840,190L1000,115H1100L1200,190L1290,230M740,30L840,20L890,70L960,190L1020,300M1090,0L1150,60L1290,110M30,825L95,800L200,885L360,910L425,890L580,945L660,940L770,885L810,880L925,800L970,740M925,800L1000,860L1090,925L1130,920L1180,865L1260,885M200,885L205,1000M30,400L90,330',
      yellow: 'M480,0L400,170L310,235L260,243L215,225L130,130L70,95L30,80M700,20L770,70L850,240L865,350M1170,660L1220,700L1290,750M1290,890L1200,950L1150,1060',
      red: 'M30,785L200,735L400,650L630,600L790,605L1000,620L1210,575L1290,540',
      tram: 'M680,15L540,120L310,300M175,410L30,527M1240,0L1290,35'
    }
  ];

  // Cemetery symbol grid on the Mount Auburn tile.
  const graves = [];
  for (let r = 0; r < 12; r++) {
    const xs = r % 2 ? [665, 773, 808, 917, 1025, 1132, 1240] : [618, 727, 870, 978, 1086, 1193];
    for (const x of xs) graves.push([x, 130 + r * 54.5]);
  }

  const stops = [
    [1167, 5575], [1041, 5900], [849, 6073], [606, 6140], [504, 6301], [273, 6224],
    [1260, 6290], [1074, 6347], [885, 6401], [1302, 5575]
  ];
  const stations = [[705, 6460], [1149, 6490]];
  const peaks = [[960, 4087], [849, 4243], [1190, 6910], [533, 7383]];

  // kind, text, x, baseline, size, fitted length, anchor
  const labels = [
    ['park', 'Meadow Brook', 260, 360, 105, 716],
    ['park', 'Park', 510, 488, 105, 212],
    ['park', 'Buzzell Field', 67, 653, 105, 580],
    ['park', 'er', 1212, 748, 105, 70],
    ['place', 'West', 1170, 345, 118, 265],
    ['town', 'Arlington', 0, 1063, 138, 660],
    ['place', 'East Arlington', 437, 1610, 117, 772],
    ['wet', 'Mugar Wetlands', 338, 1902, 106, 785],
    ['hood', 'bridge Highlands', 32, 2388, 117, 894],
    ['hood', 'N', 1250, 2200, 116, 0],
    ['place', 'nt Acres Farm', 742, 2792, 117, 0, 'end'],
    ['lake', 'ttle Fresh Pond', 24, 3065, 106, 720],
    ['park', 'Danehy', 1015, 2723, 105, 0],
    ['park', 'Father Callahan', 865, 2915, 105, 0],
    ['park', 'Playground', 963, 3045, 105, 0],
    ['hood', 'Strawberry Hill', 108, 3365, 117, 770],
    ['hood', 'Watertown', 62, 3965, 134, 650],
    ['hood', 'Coolidge', 933, 3782, 117, 0],
    ['peak', 'Mount Auburn (1', 545, 4304, 101, 737],
    ['peak', 'Coolidge Hill (11)', 472, 4460, 101, 746],
    ['hood', 'North Brighton', 757, 4715, 117, 0],
    ['hood', 'Brighton', 215, 5528, 134, 527],
    ['park', 'Ringer', 1015, 5480, 106, 0],
    ['wet', 'ster Street Hill', 32, 5833, 106, 675],
    ['hood', 'Aberdeen', 583, 6167, 116, 496],
    ['hood', 'Reservoir', 497, 6550, 116, 478],
    ['hood', 'A', 1245, 6450, 115, 0],
    ['peak', 'Aspinwall', 1122, 6698, 100, 0],
    ['peak', 'Single Tree Hill (100)', 92, 7593, 101, 890]
  ];

  const gear = Array.from({ length: 8 }, (_, i) => {
    const a = (i * Math.PI) / 4;
    return [[-10, -25], [-7, -33], [7, -33], [10, -25]]
      .map(([x, y]) => `${(45 + x * Math.cos(a) - y * Math.sin(a)).toFixed(1)},${(45 + x * Math.sin(a) + y * Math.cos(a)).toFixed(1)}`)
      .join(' ');
  }).join(' ');

  // icon, label, letter spacing in px
  const primary = [
    ['layers', 'Configure map', -1.6], ['places', 'My Places', -1.7], ['marker', 'Map markers', -1.75],
    ['folder', 'Maps & Resources', -1.4], ['nav', 'Navigation', -1.4], ['route', 'Plan a route', -1.3]
  ];
  const secondary = [
    ['screen', 'Configure screen', -1.6], ['plugin', 'Plugins', -1.5], ['settings', 'Settings', -0.9], ['help', 'Help', -1.3]
  ];
</script>

{#snippet icon(name)}
  <svg class="icon" viewBox="0 0 90 90" aria-hidden="true">
    {#if name === 'layers'}
      <path class="faint rnd" d="M45 35L76 55.5L45 76L14 55.5Z" />
      <path class="solid rnd" d="M45 14L76 34.5L45 55L14 34.5Z" />
    {:else if name === 'places'}
      <path class="mid" d="M51 30V21Q51 18 54 18H78Q81 18 81 21V30Z" />
      <path class="solid" fill-rule="evenodd" d="M15 15H33Q39 15 39 21V24H75Q81 24 81 30V69Q81 75 75 75H15Q9 75 9 69V21Q9 15 15 15ZM52.5 32L48.2 45H35L45.6 53.3L41 67L52.5 58.6L64 67L59.4 53.3L70 45H56.8Z" />
    {:else if name === 'marker'}
      <path class="line faintfill" d="M21 18H51Q54 18 56 20L67.500 34.500Q69 36 67.500 37.500L56 52Q54 54 51 54H21" />
      <path class="line" d="M21 12V78" />
    {:else if name === 'folder'}
      <path class="line faintfill" d="M12 30H78V75H12Z" />
      <path class="solid" d="M9 33V21Q9 15 15 15H36Q42 15 42 21V33Z" />
    {:else if name === 'nav'}
      <path class="line faintfill" d="M43 13Q45 11 47 13L77 43Q79 45 77 47L47 77Q45 79 43 77L13 47Q11 45 13 43Z" />
      <path class="line" d="M33 51V47Q33 42 38 42H53" />
      <path class="solid" d="M51 30L66 42L51 54Z" />
    {:else if name === 'route'}
      <path class="line midline" d="M30 24H38A10.500 10.500 0 0 1 38 45H22A10.500 10.500 0 0 0 22 66H45" />
      <circle class="solid" cx="15" cy="24" r="6" /><circle class="solid" cx="60" cy="66" r="6" />
      <path class="solid" d="M60 18H78Q81 18 81 21V36Q81 39 78 39H63V54Q63 57 60 57Q57 57 57 54V21Q57 18 60 18Z" />
    {:else if name === 'screen'}
      <path class="shade" d="M24 12H63V78H24Z" />
      <path class="line butt" d="M66 24V15Q66 12 63 12H27Q24 12 24 15V75Q24 78 27 78H63Q66 78 66 75V66" />
      <path class="solid" d="M36 12H54V15Q54 18 51 18H39Q36 18 36 15Z" />
      <path class="line" d="M36 66H54" />
      <circle cx="66" cy="45" r="6" fill="#fff" />
      <circle class="line" cx="66" cy="45" r="8.700" />
      <g>
        {#each [0, 45, 90, 135, 180, 225, 270, 315] as a}<path class="line butt" d="M66 30V36" transform={`rotate(${a} 66 45)`} />{/each}
      </g>
    {:else if name === 'plugin'}
      <path class="line shadefill" d="M18 24H33V21A9 9 0 0 1 51 21V24H66V39H69A9 9 0 0 1 69 57H66V72H51V69A9 9 0 0 0 33 69V72H18V57H21A9 9 0 0 0 21 39H18Z" />
    {:else if name === 'settings'}
      <polygon class="line shadefill" points={gear} />
      <circle class="solid" cx="45" cy="45" r="12" />
    {:else}
      <path class="solid" d="M45 9A36 36 0 0 0 36 79.500L45 87L54 79.500A36 36 0 0 0 45 9Z" />
      <circle class="shade" cx="45" cy="45" r="21" />
    {/if}
  </svg>
{/snippet}

{#snippet menu(items)}
  <ul>
    {#each items as [name, text, track]}
      <li>{@render icon(name)}<span style:letter-spacing={`${track}px`}>{text}</span></li>
    {/each}
  </ul>
{/snippet}

{#snippet layer(key, cls, width)}
  {#each tiles as t}
    {#if t[key]}<path class={cls} d={t[key]} stroke-width={width} transform={`translate(0 ${t.y})`} />{/if}
  {/each}
{/snippet}

{#snippet grave(x, y)}
  <path class="grave" d={`M${x - 9},${y + 8}v-19q0-6 9-6t9,6v19zM${x - 16},${y + 11}h32v5h-32z`} />
{/snippet}

<main class="screen">
  <nav class="drawer">
    <header><time>2:06</time></header>
    {@render menu(primary)}
    <div class="lower">{@render menu(secondary)}</div>
  </nav>

  <section class="map">
    <svg class="canvas" viewBox="30 0 1260 7596" aria-label="Map">
      <defs>
        <clipPath id="cem"><path d={tiles[3].green} /></clipPath>
        <path id="broadway" d="M872,1085L1320,1382" />
        <path id="belmont" d="M10,3598L150,3640L260,3676L480,3742" />
      </defs>
      {@render layer('bright', 'a-bright', 0)}
      {@render layer('pale', 'a-pale', 1)}
      {@render layer('mint', 'a-mint', 0)}
      {@render layer('grey', 'a-grey', 0)}
      {@render layer('sand', 'a-sand', 0)}
      {@render layer('green', 'a-green', 0)}
      {@render layer('land', 'a-land', 0)}
      {@render layer('marsh', 'a-marsh', 0)}
      {@render layer('water', 'a-water', 0)}
      {@render layer('islands', 'a-land', 0)}
      {@render layer('pale2', 'a-pale', 1)}
      {@render layer('shore', 's-shore', 6)}
      {@render layer('shore2', 's-pale', 26)}
      <g clip-path="url(#cem)" transform="translate(0 3600)">
        {#each graves as [x, y]}{@render grave(x, y)}{/each}
      </g>
      {#each [[727, 390], [773, 450], [808, 450], [618, 510], [727, 510], [665, 560], [773, 560], [727, 612], [773, 670], [727, 720], [290, 3240], [344, 3295]] as [x, y]}
        {@render grave(x, y)}
      {/each}
      <path class="s-river" stroke-width="28" d={tiles[0].river} />
      <path class="s-canal" stroke-width="14" d={tiles[0].river} />
      <path class="s-river" stroke-width="14" d={tiles[1].river} transform="translate(0 1200)" opacity=".6" />
      <path class="s-river" stroke-width="52" d={tiles[3].river} transform="translate(0 3600)" />
      <path class="s-flow" stroke-width="26" d={tiles[3].flow} transform="translate(0 3600)" />
      <path class="s-flowline" stroke-width="4" d={tiles[3].flow} transform="translate(0 3600)" />
      {@render layer('stream2', 's-river', 14)}
      {@render layer('stream', 's-river', 5)}
      {@render layer('ditch', 's-ditch', 5)}
      {@render layer('gminor', 's-gminor', 5)}
      {@render layer('minor', 's-case', 16)}
      {@render layer('road', 's-case', 22)}
      {@render layer('minor', 's-white', 10)}
      {@render layer('road', 's-white', 15)}
      {@render layer('rail', 's-rail', 11)}
      {@render layer('rail', 's-raildash', 6)}
      {@render layer('dash', 's-border', 20)}
      {@render layer('dash', 's-borderline', 4)}
      {@render layer('yellow', 's-ycase', 23)}
      {@render layer('yellow', 's-yellow', 17)}
      {@render layer('orange', 's-ocase', 27)}
      {@render layer('wide', 's-ocase', 36)}
      {@render layer('orange', 's-orange', 21)}
      {@render layer('wide', 's-orange', 31)}
      {@render layer('red', 's-rcase', 39)}
      {@render layer('trunk', 's-rcase', 40)}
      {@render layer('trunkwide', 's-rcase', 54)}
      {@render layer('red', 's-red', 33)}
      {@render layer('redfill', 'a-red', 0)}
      {@render layer('trunk', 's-trunk', 33)}
      {@render layer('trunkwide', 's-trunk', 48)}
      <path class="s-yellow" stroke-width="17" d="M380,1736L410,1730M860,4690L705,5035" />
      {@render layer('tram', 's-tram', 11)}
      {@render layer('pink', 's-pink', 7)}

      {#each stops as [x, y]}
        <g transform={`translate(${x} ${y})`}>
          <path d="M-20-30H20V16L30 30H-30L-20 16Z" fill="#fff" opacity=".75" />
          <path class="stop" fill-rule="evenodd" d="M-12-27H12Q18-27 18-20V16H13L18 26H-18L-13 16H-18V-20Q-18-27-12-27ZM-11-15V0H11V-15ZM-10 7V12H-5V7ZM5 7V12H10V7Z" />
        </g>
      {/each}
      {#each stations as [x, y]}
        <path class="stop outlined" transform={`translate(${x} ${y})`} fill-rule="evenodd" d="M-12-40H12V-32Q26-28 27-10V25Q27 32 19 32L25 40H-25L-19 32Q-27 32-27 25V-10Q-26-28-12-32ZM-18-15V5H-4V-15ZM4-15V5H18V-15ZM-16 14V22H-8V14ZM8 14V22H16V14Z" />
      {/each}
      <g transform="translate(1142 2203)">
        <path d="M-50 49V0A50 50 0 0 1 50 0V42Q50 49 43 49H-43Q-50 49-50 42Z" fill="#fff" stroke="#3f8fd8" stroke-width="7" />
        <path class="stop" fill-rule="evenodd" d="M-18-38H18Q27-38 27-28V18Q27 24 20 24H-20Q-27 24-27 18V-28Q-27-38-18-38ZM-19-20V0H19V-20ZM-17 8V15H-9V8ZM9 8V15H17V8Z" />
        <path d="M-18 26H18L25 44H-25Z" fill="#8ec4e8" />
      </g>
      {#each peaks as [x, y]}
        <path class="summit" d={`M${x} ${y - 28}l36 52h-72z`} />
      {/each}

      {#each labels as [kind, text, x, y, size, len, anchor]}
        <text class={`label ${kind}`} {x} {y} font-size={size} text-anchor={anchor ?? 'start'} textLength={len || undefined} lengthAdjust="spacingAndGlyphs">{text}</text>
      {/each}
      <text class="label street" font-size="107"><textPath href="#broadway">Broadway</textPath></text>
      <text class="label street" font-size="101" textLength="478" lengthAdjust="spacingAndGlyphs"><textPath href="#belmont">ont Street</textPath></text>

      <g class="shield">
        <rect x="34" y="1543" width="181" height="127" rx="62" />
        <text x="124" y="1650">2</text>
        <rect x="994" y="5687" width="244" height="143" rx="66" />
        <text x="1117" y="5801">30</text>
        <path d="M226 4815Q252 4832 280 4815Q308 4832 336 4815L371 4850Q350 4885 366 4916Q380 4955 340 4964Q300 4966 280 4981Q260 4966 220 4964Q180 4955 195 4916Q212 4885 190 4850Z" />
        <text x="280" y="4938">20</text>
      </g>
      <rect x="30" y="0" width="1260" height="422" fill="#fff" opacity=".5" />
    </svg>

    <div class="overlay">
      <svg class="status" viewBox="30 0 1260 422" aria-label="Signal, Wi-Fi, battery 84">
        <rect x="348" y="246" width="30" height="42" rx="9" /><rect x="396" y="225" width="30" height="63" rx="9" />
        <rect x="444" y="201" width="30" height="87" rx="9" opacity=".23" /><rect x="492" y="177" width="30" height="111" rx="9" opacity=".23" />
        <path class="wifi" d="M597 214A99 99 0 0 1 733 214M623 243A60 60 0 0 1 707 243" />
        <path d="M641 267Q665 243 689 267L665 288Z" />
        <path d="M839 171H996V294H839Q807 294 807 262V203Q807 171 839 171Z" />
        <path d="M996 171H998Q1030 171 1030 203V262Q1030 294 998 294H996ZM1039 213Q1053 220 1053 232Q1053 243 1039 248Z" opacity=".35" />
        <text x="918" y="272" text-anchor="middle">84</text>
      </svg>

      <div class="pair">
        <button class="round" aria-label="Profile">
          <svg viewBox="2 2 20 20" width="72" height="72"><path fill="#3e7bf7" d="M12 2C6.480 2 2 6.480 2 12s4.480 10 10 10 10-4.480 10-10S17.520 2 12 2zm0 17.930c-3.950 0-8-3.400-8-7.930 0-.800.100-1.600.210-2.090L9.500 14v.500c0 1.100.900 2 2 2h.500v3.430zm5.900-2.540c-.100-1.300-1-2.090-1.900-2.090h-.600v-2.300c0-.550-.450-1-1-1H8.700v-1.700h1.500c.550 0 1-.450 1-1V7.800h1.300c1.100 0 2-.900 2-2V4.500c3 1.190 5.400 4.060 5.400 7.500 0 2.080-.800 3.970-2 5.390z" /></svg>
        </button>
        <button class="round" aria-label="Search">
          <svg viewBox="0 0 60 60" width="60" height="60"><circle cx="24" cy="24" r="21" fill="none" stroke="#545454" stroke-width="6" /><path d="M39 39L57 57" stroke="#545454" stroke-width="6" stroke-linecap="round" /></svg>
        </button>
      </div>
      <div class="pair bottom">
        <button class="square" aria-label="Menu">
          <svg viewBox="0 0 72 54" width="72" height="54"><path d="M3 3H69M3 27H69M3 51H69" stroke="#545454" stroke-width="6" stroke-linecap="round" /></svg>
        </button>
        <button class="round" aria-label="Directions">
          <svg viewBox="0 0 72 72" width="72" height="72"><path fill="#545454" fill-rule="evenodd" d="M32 1.800Q36-1.500 40 1.800L70.200 32Q73.500 36 70.200 40L40 70.200Q36 73.500 32 70.200L1.800 40Q-1.500 36 1.800 32ZM42 21V30H26Q21 30 21 35V43Q21 45 24 45Q27 45 27 42V36H42V45L57 33Z" /></svg>
        </button>
      </div>
    </div>
  </section>
  <div class="home"></div>
</main>

<style>
  :global(body) { margin: 0; background: #fff; }
  .screen { position: relative; display: flex; width: 1170px; height: 2532px; overflow: hidden; font-family: Inter, "Liberation Sans", sans-serif; }
  .drawer { display: flex; flex-direction: column; width: 750px; height: 100%; background: #fff; }
  header { box-sizing: border-box; height: 141px; padding: 47px 0 0 136px; }
  time { display: block; font-size: 51px; line-height: 62px; font-weight: 600; color: #000; letter-spacing: -1.2px; }
  ul { list-style: none; margin: 0; padding: 0; }
  li { display: flex; align-items: center; height: 150px; padding-left: 30px; gap: 60px; color: #212121; font-size: 51px; }
  li span { box-sizing: border-box; display: flex; align-items: center; flex: 1; height: 150px; padding-top: 3px; white-space: nowrap; border-bottom: 2px solid #e1e1e6; text-indent: -2px; }
  .lower { box-sizing: border-box; height: 702px; margin-top: auto; background: #f4f4f4; }
  .lower li:last-child span { border-color: transparent; }
  .icon { width: 90px; height: 90px; flex: none; }
  .solid { fill: #a6a6a6; }
  .mid { fill: #d1d1d1; }
  .faint { fill: #ededed; stroke: #ededed; }
  .shade { fill: #e4e4e4; }
  .rnd { stroke-width: 9; stroke-linejoin: round; }
  .rnd.solid { stroke: #a6a6a6; }
  .line { fill: none; stroke: #a6a6a6; stroke-width: 6; stroke-linecap: round; stroke-linejoin: round; }
  .line.butt { stroke-linecap: butt; }
  .line.faintfill { fill: #ededed; }
  .line.shadefill { fill: #e4e4e4; }
  .line.midline { stroke: #d1d1d1; }

  .map { position: relative; width: 420px; height: 2532px; overflow: hidden; background: #ebe7e4; }
  .canvas { display: block; width: 420px; height: 2532px; }
  .canvas path[class^="s-"] { fill: none; stroke-linejoin: round; stroke-linecap: round; }
  .a-pale { fill: #c9ebbb; stroke: #a4d495; }
  .a-bright { fill: #cff4c8; }
  .a-mint { fill: #a3e6a5; }
  .a-grey { fill: #d9d5d2; }
  .a-sand { fill: #dfe2b0; }
  .a-marsh { fill: #d0e3c3; }
  .a-green { fill: #95ca7b; }
  .a-land { fill: #ebe7e4; }
  .a-water { fill: #77bfe1; }
  .a-red { fill: #e37a53; }
  .s-shore { stroke: #e3e3da; }
  .s-pale { stroke: #c9ebbb; }
  .grave { fill: #80c266; }
  .s-river { stroke: #77bfe1; }
  .s-ditch { stroke: #3f8be0; }
  .canvas path.s-canal { stroke: #4c84c9; stroke-linecap: butt; }
  .canvas path.s-flow { stroke: #6e98cb; stroke-dasharray: 42 22 12 22; stroke-linecap: butt; }
  .canvas path.s-flowline { stroke: #7566b4; stroke-dasharray: 30 28 8 32; stroke-linecap: butt; }
  .s-gminor { stroke: #aaa; }
  .s-case { stroke: #b7b5b3; }
  .s-white { stroke: #fff; }
  .canvas path.s-rail { stroke: #b1b0ae; stroke-linecap: butt; }
  .canvas path.s-raildash { stroke: #fff; stroke-dasharray: 52 52; stroke-linecap: butt; }
  .canvas path.s-border { stroke: #a561a8; stroke-opacity: .32; stroke-dasharray: 38 12 20 12; stroke-linecap: butt; }
  .canvas path.s-borderline { stroke: #96569b; stroke-opacity: .5; stroke-dasharray: 30 22; stroke-linecap: butt; }
  .s-ycase { stroke: #b0ab8c; }
  .s-yellow { stroke: #f4e872; }
  .s-ocase { stroke: #a39886; }
  .s-rcase { stroke: #a08f86; }
  .s-orange { stroke: #f5a757; }
  .s-red { stroke: #e37a53; }
  .s-trunk { stroke: #cf6a45; }
  .s-tram { stroke: #666; }
  .s-pink { stroke: #f095ae; }
  .stop { fill: #3f8fd8; }
  .outlined { stroke: #fff; stroke-width: 6; paint-order: stroke; }
  .summit { fill: #3d3d3d; stroke: #dbe4cd; stroke-width: 12; paint-order: stroke; }
  .label { font-family: "Noto Sans", "Open Sans", sans-serif; paint-order: stroke; stroke: rgba(240, 238, 233, .82); stroke-width: 15; stroke-linejoin: round; }
  .park { fill: #194a0e; font-style: italic; }
  .place { fill: #212121; }
  .town { fill: #000; font-weight: 700; }
  .wet { fill: #4c8c45; font-style: italic; stroke: rgba(255, 255, 255, .85); }
  .hood { fill: #212121; font-style: italic; }
  .lake { fill: #fff; font-style: italic; stroke: #72b5d5; }
  .peak { fill: #6a4a28; font-style: italic; }
  .street { fill: #000; stroke: #f4e872; }
  .shield rect, .shield path { fill: #fff; stroke: #6b6b6b; stroke-width: 8; }
  .shield text { fill: #404040; font: 700 118px "Noto Sans", sans-serif; text-anchor: middle; }

  .overlay { position: absolute; inset: 0; display: flex; flex-direction: column; }
  .status { display: block; flex: none; width: 420px; height: 141px; margin-bottom: 48px; }
  .status .wifi { fill: none; stroke: #000; stroke-width: 18; }
  .status text { fill: #b9dff0; font: 700 110px Inter, sans-serif; }
  .pair { display: flex; gap: 48px; padding-left: 48px; }
  .bottom { margin-top: auto; padding-bottom: 102px; }
  button { display: flex; align-items: center; justify-content: center; width: 150px; height: 150px; flex: none; padding: 0; border: 0; background: #fff; box-shadow: 0 6px 36px rgba(0, 0, 0, .38); }
  .round { border-radius: 50%; }
  .square { border-radius: 17px; }
  .home { position: absolute; left: 377px; bottom: 24px; width: 417px; height: 15px; border-radius: 8px; background: #000; }
</style>
